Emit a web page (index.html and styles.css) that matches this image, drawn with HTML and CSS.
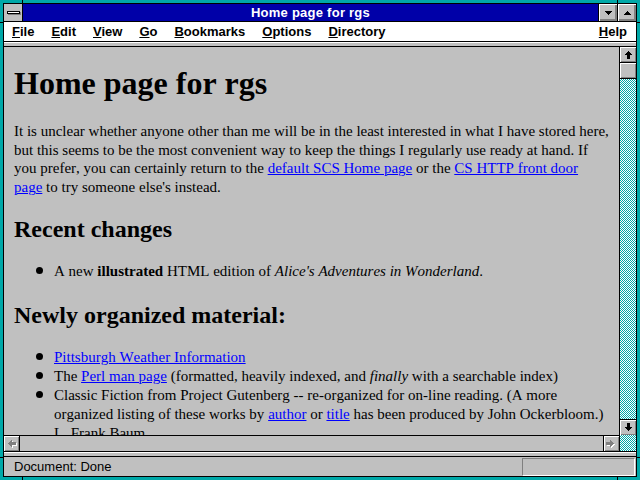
FILE: index.html
```html
<!DOCTYPE html>
<html>
<head>
<meta charset="utf-8">
<title>Home page for rgs</title>
<link rel="stylesheet" href="styles.css">
</head>
<body>
<div class="window">
  <div class="frame">
    <div class="titlebar">
      <div class="sysbox"><span class="sysbar"></span></div>
      <div class="title">Home page for rgs</div>
      <div class="tbtn">
        <svg width="7" height="4" viewBox="0 0 7 4" shape-rendering="crispEdges"><path d="M0 0h7v1h-1v1h-1v1h-1v1h-1v-1h-1v-1h-1v-1h-1z" fill="#000"/></svg>
      </div>
      <div class="tbtn">
        <svg width="7" height="4" viewBox="0 0 7 4" shape-rendering="crispEdges"><path d="M3 0h1v1h1v1h1v1h1v1h-7v-1h1v-1h1v-1h1z" fill="#000"/></svg>
      </div>
    </div>
    <div class="menubar">
      <span class="mi"><u>F</u>ile</span>
      <span class="mi"><u>E</u>dit</span>
      <span class="mi"><u>V</u>iew</span>
      <span class="mi"><u>G</u>o</span>
      <span class="mi"><u>B</u>ookmarks</span>
      <span class="mi"><u>O</u>ptions</span>
      <span class="mi"><u>D</u>irectory</span>
      <span class="mi help"><u>H</u>elp</span>
    </div>
    <div class="sep"></div>
    <div class="main">
      <div class="content">
        <h1>Home page for rgs</h1>
        <p>It is unclear whether anyone other than me will be in the least interested in what I have stored here, but this seems to be the most convenient way to keep the things I regularly use ready at hand. If you prefer, you can certainly return to the <a href="#">default SCS Home page</a> or the <a href="#">CS HTTP front door<br>page</a> to try someone else's instead.</p>
        <h2>Recent changes</h2>
        <ul>
          <li>A new <b>illustrated</b> HTML edition of <i>Alice's Adventures in Wonderland</i>.</li>
        </ul>
        <h2>Newly organized material:</h2>
        <ul>
          <li><a href="#">Pittsburgh Weather Information</a></li>
          <li>The <a href="#">Perl man page</a> (formatted, heavily indexed, and <i>finally</i> with a searchable index)</li>
          <li>Classic Fiction from Project Gutenberg -- re-organized for on-line reading. (A more organized listing of these works by <a href="#">author</a> or <a href="#">title</a> has been produced by John Ockerbloom.)<br>L. Frank Baum</li>
        </ul>
      </div>
      <div class="vscroll">
        <div class="sbtn up">
          <svg width="15" height="15" viewBox="0 0 15 15" shape-rendering="crispEdges"><path d="M7 4h1v1h1v1h1v1h1v1h-2v4h-3v-4h-2v-1h1v-1h1v-1h1z" fill="#000"/></svg>
        </div>
        <div class="thumb"></div>
        <div class="track"></div>
        <div class="sbtn down">
          <svg width="15" height="15" viewBox="0 0 15 15" shape-rendering="crispEdges"><path d="M6 3h3v4h2v1h-1v1h-1v1h-1v1h-1v-1h-1v-1h-1v-1h-1v-1h2z" fill="#000"/></svg>
        </div>
        <div class="track corner"></div>
      </div>
      <div class="hscroll">
        <div class="hbtn left">
          <svg width="15" height="15" viewBox="0 0 15 15" shape-rendering="crispEdges"><path d="M5 8h1v-1h1v-1h1v-1h1v2h4v3h-4v2h-1v-1h-1v-1h-1v-1h-1z" fill="#fff"/><path d="M4 7h1v-1h1v-1h1v-1h1v2h4v3h-4v2h-1v-1h-1v-1h-1v-1h-1z" fill="#808080"/></svg>
        </div>
        <div class="htrack"></div>
        <div class="hbtn right">
          <svg width="15" height="15" viewBox="0 0 15 15" shape-rendering="crispEdges"><path d="M11 8h-1v-1h-1v-1h-1v-1h-1v2h-4v3h4v2h1v-1h1v-1h1v-1h1z" fill="#fff"/><path d="M10 7h-1v-1h-1v-1h-1v-1h-1v2h-4v3h4v2h1v-1h1v-1h1v-1h1z" fill="#808080"/></svg>
        </div>
      </div>
    </div>
    <div class="sep sep2"></div>
    <div class="status">
      <span class="stext">Document: Done</span>
      <span class="sbox"></span>
    </div>
  </div>
</div>
</body>
</html>
```

FILE: styles.css
```css
html, body {
  margin: 0;
  padding: 0;
  background: #000;
}

.window {
  width: 640px;
  height: 480px;
  box-sizing: border-box;
  padding: 3px;
  background-color: #00a8a8;
  background-image:
    linear-gradient(#000, #000), linear-gradient(#000, #000),
    linear-gradient(#000, #000), linear-gradient(#000, #000),
    linear-gradient(#000, #000), linear-gradient(#000, #000),
    linear-gradient(#000, #000), linear-gradient(#000, #000);
  background-repeat: no-repeat;
  background-size: 1px 3px, 1px 3px, 1px 3px, 1px 3px, 3px 1px, 3px 1px, 3px 1px, 3px 1px;
  background-position: 22px 0, 617px 0, 22px 477px, 617px 477px, 0 22px, 637px 22px, 0 457px, 637px 457px;
  font-family: "Liberation Sans", Arial, sans-serif;
}

.frame {
  height: 100%;
  box-sizing: border-box;
  border: 1px solid #000;
  display: flex;
  flex-direction: column;
  background: #c0c0c0;
}

/* title bar */
.titlebar {
  height: 17px;
  flex: none;
  display: flex;
  background: #0000a8;
  border-bottom: 1px solid #000;
}

.sysbox {
  width: 18px;
  background: #c0c0c0;
  border-right: 1px solid #000;
  display: flex;
  align-items: center;
  justify-content: center;
}

.sysbar {
  width: 11px;
  height: 1px;
  background: #fff;
  border: 1px solid #000;
  box-shadow: 1px 1px 0 #808080;
}

.title {
  flex: 1;
  text-align: center;
  color: #fff;
  font-weight: bold;
  font-size: 13px;
  letter-spacing: 0.25px;
  line-height: 17px;
}

.tbtn {
  width: 18px;
  border-left: 1px solid #000;
  background: #c0c0c0;
  box-shadow: inset 1px 1px #fff, inset -1px -1px #808080, inset -2px -2px #808080;
  display: flex;
  align-items: center;
  justify-content: center;
}

/* menu */
.menubar {
  height: 19px;
  flex: none;
  background: #fff;
  border-bottom: 1px solid #000;
  display: flex;
  gap: 17px;
  padding: 0 9px 0 8px;
  font-size: 13px;
  font-weight: bold;
  line-height: 19px;
  color: #000;
}

.mi u {
  text-decoration-thickness: 1px;
  text-underline-offset: 1px;
}

.help {
  margin-left: auto;
}

.sep {
  height: 4px;
  flex: none;
  border-bottom: 1px solid #000;
  background: linear-gradient(#fff 0 1px, #c0c0c0 1px);
}

/* main area */
.main {
  flex: 1;
  min-height: 0;
  display: grid;
  grid-template-columns: 1fr 16px;
  grid-template-rows: 1fr 16px;
  border-bottom: 1px solid #000;
}

.content {
  grid-row: 1;
  grid-column: 1;
  border-right: 1px solid #000;
  overflow: hidden;
  padding: 0 8px 0 10px;
  font-family: "Liberation Serif", "Times New Roman", serif;
  font-size: 15px;
  line-height: 18.6px;
  color: #000;
  font-kerning: none;
}

.content h1 {
  font-size: 32px;
  line-height: 36px;
  margin: 18px 0 21px;
}

.content p {
  margin: 0;
}

.content h2 {
  font-size: 24px;
  line-height: 28px;
  margin: 19px 0;
}

.content ul {
  list-style: none;
  margin: 19px 0;
  padding: 0 0 0 40px;
  line-height: 19.2px;
}

.content li::before {
  content: "";
  display: inline-block;
  width: 7px;
  height: 7px;
  border-radius: 50%;
  background: #000;
  margin-left: -18px;
  margin-right: 11px;
  vertical-align: 2px;
}

.content a {
  color: #0000ff;
  text-decoration: underline;
  text-decoration-thickness: 1px;
}

/* vertical scrollbar */
.vscroll {
  grid-row: 1 / 3;
  grid-column: 2;
  display: flex;
  flex-direction: column;
}

.sbtn, .thumb {
  height: 16px;
  flex: none;
  box-sizing: border-box;
  background: #c0c0c0;
  box-shadow: inset 1px 1px #fff, inset -1px -1px #808080;
  display: flex;
  align-items: center;
  justify-content: center;
}

.sbtn.up, .thumb {
  border-bottom: 1px solid #000;
}

.sbtn.down {
  border-top: 1px solid #000;
}

.track {
  flex: 1;
  background: repeating-conic-gradient(#00a8a8 0 25%, #fff 0 50%) 0 0 / 2px 2px;
}

.track.corner {
  flex: none;
  height: 16px;
}

/* horizontal scrollbar */
.hscroll {
  grid-row: 2;
  grid-column: 1;
  border-top: 1px solid #000;
  border-right: 1px solid #000;
  display: flex;
  background: #c0c0c0;
}

.hbtn {
  width: 16px;
  flex: none;
  box-sizing: border-box;
  background: #c0c0c0;
  box-shadow: inset 1px 1px #fff, inset -1px -1px #808080;
  display: flex;
  align-items: center;
  justify-content: center;
}

.hbtn.left {
  border-right: 1px solid #000;
}

.hbtn.right {
  border-left: 1px solid #000;
}

.htrack {
  flex: 1;
}

/* status bar */
.status {
  height: 19px;
  flex: none;
  display: flex;
  align-items: center;
  padding: 0 1px 0 10px;
  font-size: 13px;
  line-height: 19px;
  color: #000;
}

.sbox {
  margin-left: auto;
  width: 113px;
  height: 18px;
  align-self: flex-end;
  box-sizing: border-box;
  border: 1px solid;
  border-color: #808080 #fff #fff #808080;
}
```
